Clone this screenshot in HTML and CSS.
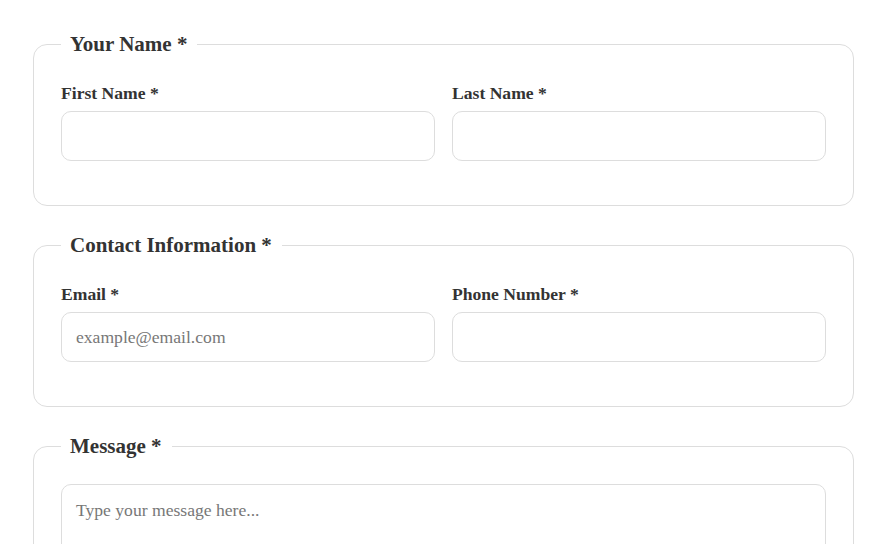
FILE: index.html
```html
<!DOCTYPE html>
<html lang="en">
<head>
<meta charset="utf-8">
<title>Contact Form</title>
<link rel="stylesheet" href="styles.css">
</head>
<body>
<form class="form">
  <fieldset class="group">
    <legend class="legend">Your Name *</legend>
    <div class="row">
      <div class="field">
        <label class="label" for="fn">First Name *</label>
        <input class="input" id="fn" type="text">
      </div>
      <div class="field">
        <label class="label" for="ln">Last Name *</label>
        <input class="input" id="ln" type="text">
      </div>
    </div>
  </fieldset>
  <fieldset class="group">
    <legend class="legend">Contact Information *</legend>
    <div class="row">
      <div class="field">
        <label class="label" for="em">Email *</label>
        <input class="input" id="em" type="email" placeholder="example@email.com">
      </div>
      <div class="field">
        <label class="label" for="ph">Phone Number *</label>
        <input class="input" id="ph" type="tel">
      </div>
    </div>
  </fieldset>
  <fieldset class="group group-message">
    <legend class="legend">Message *</legend>
    <textarea class="textarea" placeholder="Type your message here..."></textarea>
  </fieldset>
</form>
</body>
</html>
```
FILE: styles.css
```css
* { box-sizing: border-box; }
html, body { background: #fff; }
body {
  margin: 0;
  padding: 32px 34px 32px 33px;
  font-family: "Liberation Serif", "Times New Roman", serif;
  color: #333;
}
.form {
  width: 100%;
}
.group {
  margin: 0 0 27px 0;
  padding: 27px;
  border: 1px solid #ddd;
  border-radius: 14px;
  min-width: 0;
}
.group-message { padding-top: 26px; }
.legend {
  padding: 0 10px 0 9px;
  font-size: 21px;
  font-weight: bold;
  line-height: 24px;
}
.row {
  display: grid;
  grid-template-columns: 1fr 1fr;
  column-gap: 17px;
  margin-bottom: 17px;
}
.field { display: flex; flex-direction: column; }
.label {
  font-size: 17.6px;
  font-weight: bold;
  line-height: 20px;
  margin-bottom: 8px;
}
.input, .textarea {
  width: 100%;
  border: 1px solid #ddd;
  border-radius: 10px;
  font-family: "Liberation Serif", "Times New Roman", serif;
  font-size: 17.6px;
  color: #333;
  padding: 0 14px;
  background: #fff;
  outline: none;
}
.input { height: 50px; }
.textarea {
  display: block;
  height: 140px;
  padding: 15px 14px;
  resize: vertical;
}
.input::placeholder, .textarea::placeholder { color: #777; }
```
